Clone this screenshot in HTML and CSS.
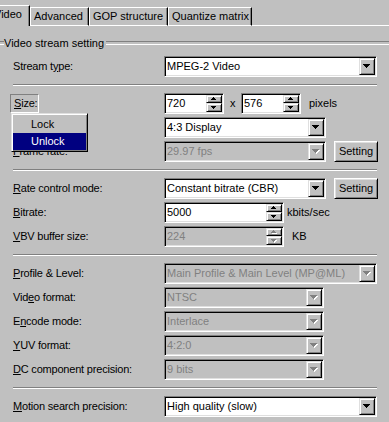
FILE: index.html
```html
<!DOCTYPE html>
<html>
<head>
<meta charset="utf-8">
<link rel="stylesheet" href="styles.css">
</head>
<body>
<div class="tabs">
  <div class="tab active">Video</div>
  <div class="tab t-adv">Advanced</div>
  <div class="tab t-gop">GOP structure</div>
  <div class="tab t-qm">Quantize matrix</div>
  <div class="tab-fill"></div>
</div>

<div class="group-title"><span>Video stream setting</span></div>

<div class="rows">
  <div class="row">
    <span class="label">Stream t<u>y</u>pe:</span>
    <div class="combo w-full"><span class="val">MPEG-2 Video</span><span class="drop"><svg width="7" height="4" viewBox="0 0 7 4"><path d="M0 0h7v1H0zM1 1h5v1H1zM2 2h3v1H2zM3 3h1v1H3z" fill="#000"/></svg></span></div>
  </div>
  <div class="sep"></div>
  <div class="row">
    <span class="label"><span class="flat"><u>S</u>ize:</span></span>
    <div class="edit w-num"><span class="val">720</span><span class="spin"><span class="up"><svg width="5" height="3" viewBox="0 0 5 3"><path d="M2 0h1v1H2zM1 1h3v1H1zM0 2h5v1H0z" fill="#000"/></svg></span><span class="dn"><svg width="5" height="3" viewBox="0 0 5 3"><path d="M0 0h5v1H0zM1 1h3v1H1zM2 2h1v1H2z" fill="#000"/></svg></span></span></div>
    <span class="times">x</span>
    <div class="edit w-num"><span class="val">576</span><span class="spin"><span class="up"><svg width="5" height="3" viewBox="0 0 5 3"><path d="M2 0h1v1H2zM1 1h3v1H1zM0 2h5v1H0z" fill="#000"/></svg></span><span class="dn"><svg width="5" height="3" viewBox="0 0 5 3"><path d="M0 0h5v1H0zM1 1h3v1H1zM2 2h1v1H2z" fill="#000"/></svg></span></span></div>
    <span class="unit u-pixels">pixels</span>
  </div>
  <div class="row">
    <span class="label"></span>
    <div class="combo w-mid"><span class="val">4:3 Display</span><span class="drop"><svg width="7" height="4" viewBox="0 0 7 4"><path d="M0 0h7v1H0zM1 1h5v1H1zM2 2h3v1H2zM3 3h1v1H3z" fill="#000"/></svg></span></div>
  </div>
  <div class="row">
    <span class="label"><u>F</u>rame rate:</span>
    <div class="combo w-mid dis"><span class="val">29.97 fps</span><span class="drop"><svg width="8" height="5" viewBox="0 0 8 5"><path d="M1 1h7v1H1zM2 2h5v1H2zM3 3h3v1H3zM4 4h1v1H4z" fill="#fff"/><path d="M0 0h7v1H0zM1 1h5v1H1zM2 2h3v1H2zM3 3h1v1H3z" fill="#808080"/></svg></span></div>
    <span class="btn">Setting</span>
  </div>
  <div class="sep"></div>
  <div class="row">
    <span class="label"><u>R</u>ate control mode:</span>
    <div class="combo w-mid"><span class="val">Constant bitrate (CBR)</span><span class="drop"><svg width="7" height="4" viewBox="0 0 7 4"><path d="M0 0h7v1H0zM1 1h5v1H1zM2 2h3v1H2zM3 3h1v1H3z" fill="#000"/></svg></span></div>
    <span class="btn">Setting</span>
  </div>
  <div class="row">
    <span class="label"><u>B</u>itrate:</span>
    <div class="edit w-rate"><span class="val">5000</span><span class="spin"><span class="up"><svg width="5" height="3" viewBox="0 0 5 3"><path d="M2 0h1v1H2zM1 1h3v1H1zM0 2h5v1H0z" fill="#000"/></svg></span><span class="dn"><svg width="5" height="3" viewBox="0 0 5 3"><path d="M0 0h5v1H0zM1 1h3v1H1zM2 2h1v1H2z" fill="#000"/></svg></span></span></div>
    <span class="unit u-kbits">kbits/sec</span>
  </div>
  <div class="row">
    <span class="label"><u>V</u>BV buffer size:</span>
    <div class="edit w-rate dis"><span class="val">224</span><span class="spin"><span class="up"><svg width="6" height="4" viewBox="0 0 6 4"><path d="M3 1h1v1H3zM2 2h3v1H2zM1 3h5v1H1z" fill="#fff"/><path d="M2 0h1v1H2zM1 1h3v1H1zM0 2h5v1H0z" fill="#808080"/></svg></span><span class="dn"><svg width="6" height="4" viewBox="0 0 6 4"><path d="M1 1h5v1H1zM2 2h3v1H2zM3 3h1v1H3z" fill="#fff"/><path d="M0 0h5v1H0zM1 1h3v1H1zM2 2h1v1H2z" fill="#808080"/></svg></span></span></div>
    <span class="unit u-kb">KB</span>
  </div>
  <div class="sep"></div>
  <div class="row">
    <span class="label"><u>P</u>rofile &amp; Level:</span>
    <div class="combo w-full dis"><span class="val">Main Profile &amp; Main Level (MP@ML)</span><span class="drop"><svg width="8" height="5" viewBox="0 0 8 5"><path d="M1 1h7v1H1zM2 2h5v1H2zM3 3h3v1H3zM4 4h1v1H4z" fill="#fff"/><path d="M0 0h7v1H0zM1 1h5v1H1zM2 2h3v1H2zM3 3h1v1H3z" fill="#808080"/></svg></span></div>
  </div>
  <div class="row">
    <span class="label">Vid<u>e</u>o format:</span>
    <div class="combo w-narrow dis"><span class="val">NTSC</span><span class="drop"><svg width="8" height="5" viewBox="0 0 8 5"><path d="M1 1h7v1H1zM2 2h5v1H2zM3 3h3v1H3zM4 4h1v1H4z" fill="#fff"/><path d="M0 0h7v1H0zM1 1h5v1H1zM2 2h3v1H2zM3 3h1v1H3z" fill="#808080"/></svg></span></div>
  </div>
  <div class="row">
    <span class="label">E<u>n</u>code mode:</span>
    <div class="combo w-narrow dis"><span class="val">Interlace</span><span class="drop"><svg width="8" height="5" viewBox="0 0 8 5"><path d="M1 1h7v1H1zM2 2h5v1H2zM3 3h3v1H3zM4 4h1v1H4z" fill="#fff"/><path d="M0 0h7v1H0zM1 1h5v1H1zM2 2h3v1H2zM3 3h1v1H3z" fill="#808080"/></svg></span></div>
  </div>
  <div class="row">
    <span class="label"><u>Y</u>UV format:</span>
    <div class="combo w-narrow dis"><span class="val">4:2:0</span><span class="drop"><svg width="8" height="5" viewBox="0 0 8 5"><path d="M1 1h7v1H1zM2 2h5v1H2zM3 3h3v1H3zM4 4h1v1H4z" fill="#fff"/><path d="M0 0h7v1H0zM1 1h5v1H1zM2 2h3v1H2zM3 3h1v1H3z" fill="#808080"/></svg></span></div>
  </div>
  <div class="row">
    <span class="label"><u>D</u>C component precision:</span>
    <div class="combo w-narrow dis"><span class="val">9 bits</span><span class="drop"><svg width="8" height="5" viewBox="0 0 8 5"><path d="M1 1h7v1H1zM2 2h5v1H2zM3 3h3v1H3zM4 4h1v1H4z" fill="#fff"/><path d="M0 0h7v1H0zM1 1h5v1H1zM2 2h3v1H2zM3 3h1v1H3z" fill="#808080"/></svg></span></div>
  </div>
  <div class="sep"></div>
  <div class="row">
    <span class="label"><u>M</u>otion search precision:</span>
    <div class="combo w-full"><span class="val">High quality (slow)</span><span class="drop"><svg width="7" height="4" viewBox="0 0 7 4"><path d="M0 0h7v1H0zM1 1h5v1H1zM2 2h3v1H2zM3 3h1v1H3z" fill="#000"/></svg></span></div>
  </div>
</div>

<div class="menu">
  <div class="item">Lock</div>
  <div class="item sel">Unlock</div>
</div>
</body>
</html>
```

FILE: styles.css
```css
* { box-sizing: border-box; }
html, body { margin: 0; padding: 0; }
body {
  width: 389px;
  height: 422px;
  overflow: hidden;
  position: relative;
  background: #c0c0c0;
  color: #000;
  font-family: "Liberation Sans", Arial, sans-serif;
  font-size: 11px;
  line-height: 13px;
}
svg { display: block; shape-rendering: crispEdges; }

/* tabs */
.tabs { display: flex; align-items: flex-end; height: 26px; }
.tab {
  flex: none;
  height: 19px;
  padding: 2px 0 0 3px;
  border-top: 1px solid #fff;
  border-left: 1px solid #fff;
  border-right: 1px solid #000;
  border-bottom: 1px solid #fff;
  box-shadow: inset -1px 0 #808080;
  white-space: nowrap;
  overflow: hidden;
}
.tab.active {
  height: 21px;
  width: 41px;
  margin-left: -11px;
  padding-left: 4px;
  border-bottom: 0;
}
.t-adv { width: 59px; }
.t-gop { width: 79px; }
.t-qm { width: 84px; }
.tab-fill { flex: 1; height: 1px; background: #fff; }

/* group title */
.group-title {
  display: flex;
  align-items: center;
  height: 14px;
  margin-top: 10px;
  line-height: 14px;
  white-space: nowrap;
}
.group-title::before,
.group-title::after {
  content: "";
  height: 2px;
  border-top: 1px solid #808080;
  border-bottom: 1px solid #fff;
}
.group-title::before { width: 4px; flex: none; }
.group-title::after { flex: 1; margin-left: 2px; }

/* rows */
.rows {
  display: flex;
  flex-direction: column;
  gap: 3px;
  margin-top: 6px;
  padding-left: 13px;
}
.row { display: flex; align-items: center; height: 21px; }
.label { width: 151px; flex: none; white-space: nowrap; letter-spacing: -0.2px; }
.sep {
  width: 364px;
  height: 2px;
  margin: 4px 0;
  border-top: 1px solid #808080;
  border-bottom: 1px solid #fff;
}
.flat {
  display: block;
  width: 29px;
  height: 19px;
  margin-left: -3px;
  padding-left: 3px;
  line-height: 17px;
  border: 1px solid;
  border-color: #808080 #fff #fff #808080;
}

/* combo / edit */
.combo, .edit {
  flex: none;
  display: flex;
  height: 21px;
  padding: 1px;
  border: 1px solid;
  border-color: #808080 #fff #fff #808080;
  box-shadow: inset 1px 1px #000, inset -1px -1px #dfdfdf;
  background: #fff;
}
.combo.dis, .edit.dis { background: #c0c0c0; color: #808080; }
.val { flex: 1; padding-left: 1px; line-height: 17px; white-space: nowrap; overflow: hidden; }
.w-full { width: 213px; }
.w-mid { width: 162px; }
.w-narrow { width: 160px; }
.w-num { width: 60px; }
.w-rate { width: 120px; }

.drop {
  flex: none;
  width: 16px;
  height: 17px;
  padding: 5px 0 0 3px;
  background: #c0c0c0;
  border: 1px solid;
  border-color: #dfdfdf #000 #000 #dfdfdf;
  box-shadow: inset 1px 1px #fff, inset -1px -1px #808080;
}
.spin { flex: none; width: 16px; height: 17px; display: flex; flex-direction: column; }
.spin .up, .spin .dn {
  width: 16px;
  background: #c0c0c0;
  border: 1px solid;
  border-color: #dfdfdf #000 #000 #dfdfdf;
  box-shadow: inset 1px 1px #fff, inset -1px -1px #808080;
  padding-left: 4px;
}
.spin .up { height: 8px; padding-top: 1px; }
.spin .dn { height: 9px; padding-top: 2px; }

.times { width: 17px; padding-left: 6px; flex: none; }
.unit { flex: none; white-space: nowrap; }
.u-pixels { margin-left: 8px; }
.u-kbits { margin-left: 3px; }
.u-kb { margin-left: 8px; }

.btn {
  flex: none;
  width: 44px;
  height: 21px;
  margin-left: 8px;
  line-height: 19px;
  text-align: center;
  background: #c0c0c0;
  border: 1px solid;
  border-color: #fff #000 #000 #fff;
  box-shadow: inset 1px 1px #dfdfdf, inset -1px -1px #808080;
}

/* popup menu over the Size label */
.menu {
  position: absolute;
  left: 11px;
  top: 113px;
  width: 77px;
  padding: 2px 1px 1px 1px;
  background: #c0c0c0;
  border: 1px solid;
  border-color: #dfdfdf #000 #000 #dfdfdf;
  box-shadow: inset 1px 1px #fff, inset -1px -1px #808080;
}
.menu .item { height: 17px; line-height: 17px; padding-left: 18px; }
.menu .item.sel { background: #000080; color: #fff; }
```
